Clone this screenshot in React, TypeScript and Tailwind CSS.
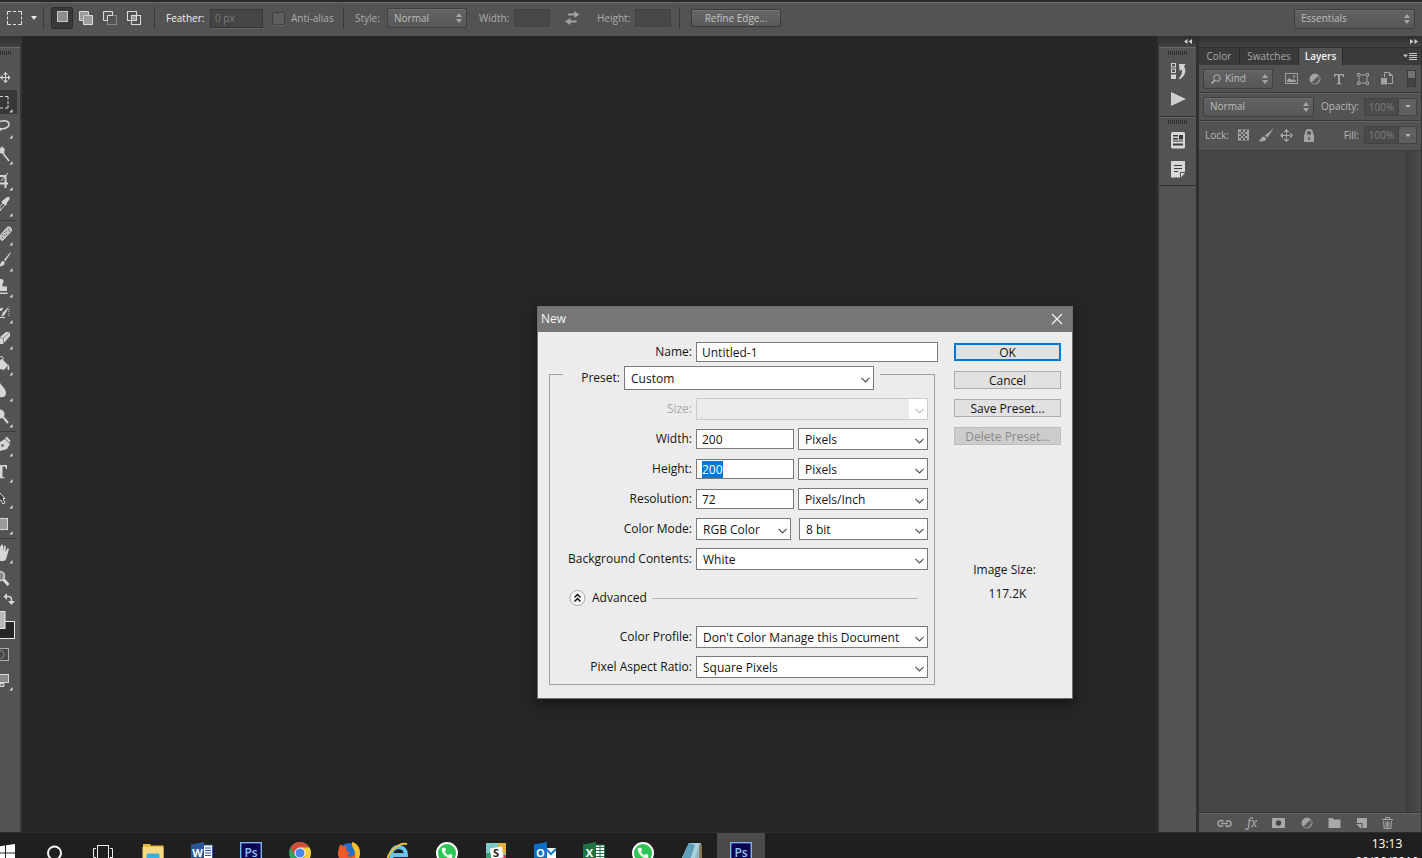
import { useEffect, useRef, type ReactNode } from 'react';
import { Phone } from 'lucide-react';
import clsx from 'clsx';

const TOOL = '#d6d6d6';

function UpDown() {
  return (
    <svg className="pointer-events-none absolute right-1 top-1/2 -translate-y-1/2" width="6" height="10" viewBox="0 0 6 10">
      <path d="M3 0l3 4H0zM3 10l3-4H0z" fill="#a6a6a6" />
    </svg>
  );
}

interface DarkSelectProps {
  label: string;
  value: string;
  className: string;
  textClass?: string;
  children?: ReactNode;
}

function DarkSelect({ label, value, className, textClass = 'pl-[6px]', children }: DarkSelectProps) {
  return (
    <div
      className={clsx(
        'relative h-5 shrink-0 rounded-[2px] border border-[#3f3f3f] bg-linear-to-b from-[#636363] to-[#575757] shadow-[inset_0_1px_0_#6d6d6d]',
        className,
      )}
    >
      <select aria-label={label} className={clsx('block h-full w-full appearance-none bg-transparent text-[#bdbdbd] outline-none', textClass)}>
        <option>{value}</option>
      </select>
      {children}
      <UpDown />
    </div>
  );
}

function Separator() {
  return <div className="h-[22px] w-px shrink-0 bg-[#3c3c3c]" />;
}

function OptionsBar() {
  return (
    <header className="flex h-9 shrink-0 items-center border-t-2 border-[#282828] bg-[#535353] pb-[2px] pr-[7px] text-[10px] text-[#adadad] shadow-[inset_0_1px_0_#6c6c6c]">
      <button aria-label="Rectangular marquee presets" className="flex w-[43px] shrink-0 items-center gap-[9px] pl-[7px]">
        <svg width="15" height="14" viewBox="0 0 15 14" fill="none" stroke="#e0e0e0">
          <path d="M.5 4V.5H4M6 .5h3M11 .5h3.500V4M14.500 5.500v3M14.500 10v3.500H11M9 13.500H6M4 13.500H.5V10M.5 8.500v-3" />
        </svg>
        <svg width="6" height="4" viewBox="0 0 6 4"><path d="M0 0h6L3 4z" fill="#e6e6e6" /></svg>
      </button>
      <Separator />
      <div className="ml-[7px] flex shrink-0 items-center">
        <button aria-label="New selection" className="flex h-[22px] w-[22px] items-center justify-center rounded-[2px] border border-[#2c2c2c] bg-[#393939] pb-[3px]">
          <svg width="11" height="11" viewBox="0 0 11 11"><rect x=".5" y=".5" width="10" height="10" fill="#8d8d8d" stroke="#c9c9c9" /></svg>
        </button>
        <button aria-label="Add to selection" className="ml-[6px]">
          <svg width="14" height="14" viewBox="0 0 14 14">
            <path d="M.5.5h9v4h4v9h-9v-4h-4z" fill="#9b9b9b" stroke="#dcdcdc" />
            <path d="M4.500 9.500v-5h5" fill="none" stroke="#c8c8c8" />
          </svg>
        </button>
        <button aria-label="Subtract from selection" className="ml-[10px]">
          <svg width="14" height="14" viewBox="0 0 14 14" fill="none">
            <rect x="4.500" y="4.500" width="9" height="9" stroke="#878787" />
            <path d="M.5.5h9v4h-5v5h-4z" fill="#5c5c5c" stroke="#dcdcdc" />
          </svg>
        </button>
        <button aria-label="Intersect with selection" className="ml-[10px]">
          <svg width="14" height="14" viewBox="0 0 14 14" fill="none" stroke="#dcdcdc">
            <rect x="4.500" y="4.500" width="5" height="5" fill="#9b9b9b" />
            <rect x=".5" y=".5" width="9" height="9" />
            <rect x="4.500" y="4.500" width="9" height="9" />
          </svg>
        </button>
      </div>
      <div className="ml-[13px]" />
      <Separator />
      <label htmlFor="feather" className="ml-[11px] w-11 shrink-0 text-[#f2f2f2]">Feather:</label>
      <input
        id="feather"
        defaultValue="0 px"
        className="h-[19px] w-[53px] shrink-0 border border-[#363636] bg-[#454545] pl-1 text-[#7c7c7c] shadow-[0_1px_0_#636363] outline-none"
      />
      <input
        id="antialias"
        type="checkbox"
        className="ml-[9px] h-[13px] w-[13px] shrink-0 appearance-none rounded-[2px] border border-[#404040] bg-[#5e5e5e] shadow-[0_1px_0_#626262]"
      />
      <label htmlFor="antialias" className="ml-[6px] w-[52px] shrink-0">Anti-alias</label>
      <Separator />
      <span className="ml-[11px] w-8 shrink-0">Style:</span>
      <DarkSelect label="Style" value="Normal" className="w-20" />
      <label htmlFor="selw" className="ml-3 w-[35px] shrink-0">Width:</label>
      <input id="selw" className="h-[18px] w-9 shrink-0 border border-[#414141] bg-[#484848] shadow-[0_1px_0_#5c5c5c]" />
      <button aria-label="Swap width and height" className="ml-[15px] shrink-0">
        <svg width="15" height="14" viewBox="0 0 15 14" fill="#a2a2a2">
          <path d="M9 0l5.500 3.500L9 7V4.500H3v-2h6zM5.500 7L0 10.500 5.500 14v-2.500h6v-2h-6z" />
        </svg>
      </button>
      <label htmlFor="selh" className="ml-[17px] w-[38px] shrink-0">Height:</label>
      <input id="selh" className="h-[18px] w-9 shrink-0 border border-[#414141] bg-[#484848] shadow-[0_1px_0_#5c5c5c]" />
      <div className="ml-[8px]" />
      <Separator />
      <button className="ml-[11px] h-[18px] w-[90px] shrink-0 rounded-[2px] border border-[#3b3b3b] bg-linear-to-b from-[#676767] to-[#5a5a5a] text-[#c4c4c4] shadow-[inset_0_1px_0_#757575]">
        Refine Edge...
      </button>
      <div className="flex-1" />
      <DarkSelect label="Workspace" value="Essentials" className="mt-px w-[121px]" />
    </header>
  );
}

interface Tool {
  name: string;
  active?: boolean;
  plain?: boolean;
  art: ReactNode;
}

// The palette hangs over the left edge of the window, so only the right part of each glyph is drawn.
const toolGroups: Tool[][] = [
  [
    {
      name: 'Move',
      plain: true,
      art: (
        <g fill={TOOL}>
          <path d="M0 14h10v1H0zM5 10h1v9H5z" />
          <path d="M5.500 9l2.500 2.500H3zM5.500 20L3 17.500h5zM10.500 14.500L8 12v5zM0 14.500L2.500 12v5z" />
        </g>
      ),
    },
    { name: 'Marquee', active: true, art: <path d="M0 7.500h3M5 7.500h3v3M8 12v3M8 16v3H5M3 19H0" stroke={TOOL} fill="none" /> },
    {
      name: 'Lasso',
      art: <path d="M0 6.500c4-1.500 9-1 9 3 0 3-5 5-9 4M0 15.500l2-2" stroke={TOOL} strokeWidth="1.500" fill="none" />,
    },
    {
      name: 'Magic Wand',
      art: <path d="M2 11l7 9M0 9.500h5M2 5.500v7M0 7l4 5M4 7l-4 5" stroke={TOOL} strokeWidth="1.500" fill="none" />,
    },
    {
      name: 'Crop',
      art: (
        <g stroke={TOOL} fill="none">
          <path d="M0 9h5.500v12M0 16.500h8" strokeWidth="2" />
          <path d="M1 14l7-8" />
        </g>
      ),
    },
    {
      name: 'Eyedropper',
      art: (
        <g fill={TOOL}>
          <path d="M2 8l2-1.500L6.500 4.500c2-2 4.500 0 2.500 2.500L7 9.500 6.500 12 5 12.500 1.500 9z" />
          <path d="M3 10L0 13.500V18l4.500-5.500" stroke={TOOL} fill="none" />
        </g>
      ),
    },
  ],
  [
    {
      name: 'Healing Brush',
      art: (
        <g>
          <path d="M-2 16L7 5.500c2-2 6 1 4 4L2 19" fill="#bdbdbd" stroke={TOOL} />
          <g fill="#666"><path d="M4 10h1v1H4zM6 12h1v1H6zM6 9h1v1H6zM4 13h1v1H4zM8 7h1v1H8zM9 9h1v1H9zM2 12h1v1H2zM2 15h1v1H2z" /></g>
        </g>
      ),
    },
    {
      name: 'Brush',
      art: <path d="M10.500 4L4 12l1 1.500 5.500-8zM3 13c-2 0-2 3-4 5 3 1 6-1 5.500-4z" fill={TOOL} />,
    },
    {
      name: 'Clone Stamp',
      art: <path d="M-1 5h2c3 0 3 3 1.500 5v2.500H7V17H-1zM0 18.500h7.500V20H0z" fill={TOOL} />,
    },
    {
      name: 'History Brush',
      art: (
        <g fill={TOOL}>
          <path d="M9.500 6L3 12.500 1 17l3.500-2z" />
          <path d="M0 9l3-1-2 3zM0 17.500h5" stroke={TOOL} />
          <path d="M9 9v7" stroke={TOOL} strokeDasharray="1 1" />
        </g>
      ),
    },
    {
      name: 'Eraser',
      art: (
        <g>
          <path d="M0 11l6-5h4v4l-7 8H0z" fill={TOOL} />
          <path d="M0 12h3.500L10 6M3.500 12v6" stroke="#858585" fill="none" />
        </g>
      ),
    },
    {
      name: 'Paint Bucket',
      art: (
        <g fill={TOOL}>
          <path d="M0 8l2-1 6 6-4 5-4-1z" />
          <path d="M3 9V5.500C3 4 0 4 0 6" fill="none" stroke={TOOL} />
          <path d="M8 12c1 2 2 4 1 6-2 0-2-2-1-6z" />
        </g>
      ),
    },
    { name: 'Blur', art: <path d="M0 5c2 3 6 6 6 10 0 5-6 5-8 3z" fill={TOOL} /> },
    {
      name: 'Dodge',
      art: (
        <g>
          <circle cx="0" cy="10" r="4.500" fill={TOOL} />
          <path d="M3 13l5 6" stroke={TOOL} strokeWidth="2" />
        </g>
      ),
    },
  ],
  [
    {
      name: 'Pen',
      art: (
        <g>
          <path d="M0 9l5-3 5 5-3 5-7 2z" fill={TOOL} />
          <path d="M4.500 5L7 3.500 11 8 9.500 10z" fill={TOOL} stroke="#535353" strokeWidth=".5" />
          <circle cx="2.500" cy="12.500" r="1.200" fill="#535353" />
        </g>
      ),
    },
    {
      name: 'Type',
      art: <path d="M-6 6H7v4H6C6 8 5 7.300 2.500 7.300V17c0 1 .5 1.400 2 1.500v.8h-6v-.8C0 18.400 0 18 0 17V7h-6z" fill={TOOL} />,
    },
    { name: 'Path Selection', art: <path d="M0 8l5 5.500H3l2 4.500-2 1-2-4-3 2z" fill="#3c3c3c" stroke={TOOL} /> },
    { name: 'Rectangle', art: <rect x="-8" y="7.500" width="15.500" height="11" fill="#999" stroke={TOOL} /> },
  ],
  [
    {
      name: 'Hand',
      art: (
        <path
          d="M-1 12V7c0-1.500 2-1.500 2 0v4V5.500C1 4 3 4 3 5.500V11l.8-4.500c.3-1.500 2-1 1.900.3L5.500 12l1.500-3c.7-1.300 2.200-.7 1.800.6L7 16c-.7 3-1.500 5-4 5h-5z"
          fill={TOOL}
        />
      ),
    },
    {
      name: 'Zoom',
      plain: true,
      art: (
        <g>
          <circle cx="0" cy="10" r="4.500" fill="#888" stroke={TOOL} strokeWidth="1.500" />
          <path d="M3.500 13.500l5 5.500" stroke={TOOL} strokeWidth="3" />
        </g>
      ),
    },
  ],
];

function ToolPalette() {
  return (
    <aside className="flex w-[22px] shrink-0 flex-col border-r-2 border-[#353535] bg-[#535353]">
      <div className="h-3 shrink-0 border-b border-[#6a6a6a] bg-linear-to-b from-[#2f2f2f] to-[#434343]" />
      <Grip className="mb-2 ml-0 mt-[3px] w-3" />
      {toolGroups.map((group, i) => (
        <div key={i} className="flex flex-col">
          {i > 0 && <div className="my-px h-px w-4 bg-[#3b3b3b]" />}
          {group.map((tool) => (
            <button
              key={tool.name}
              aria-label={tool.name}
              className={clsx('h-[26px] w-[17px]', tool.active && 'rounded-r-[2px] bg-[#373737] bg-clip-content pb-px pt-px')}
            >
              <svg className={clsx(tool.active && '-my-px')} width="17" height="26" viewBox="0 0 17 26">
                {tool.art}
                {!tool.plain && <path d="M12.500 20v3.500H9.500z" fill="#e4e4e4" />}
              </svg>
            </button>
          ))}
        </div>
      ))}
      <button aria-label="Swap colors" className="h-[18px] w-[17px]">
        <svg width="17" height="18" viewBox="0 0 17 18" fill="none" stroke={TOOL}>
          <path d="M5 4.500h3.500c2 0 3 1 3 3V10" strokeWidth="1.500" />
          <path d="M7 1L3.500 4.500 7 8zM8 9h7l-3.500 4z" fill={TOOL} stroke="none" />
        </svg>
      </button>
      <svg width="17" height="30" viewBox="0 0 17 30">
        <rect x="-4" y="11.500" width="18.500" height="17" fill="#262626" stroke="#e8e8e8" />
        <rect x="-10" y="1.500" width="15" height="17" fill="#b8b8b8" stroke="#e8e8e8" />
      </svg>
      <button aria-label="Quick mask" className="mt-[7px]">
        <svg width="17" height="15" viewBox="0 0 17 15" fill="none">
          <rect x="-8" y="1.500" width="16.500" height="12" fill="#484848" stroke="#ababab" />
          <path d="M0 3.500a4 4 0 010 8" stroke="#ccc" strokeDasharray="1 1" />
        </svg>
      </button>
      <button aria-label="Screen mode" className="mt-[11px]">
        <svg width="17" height="18" viewBox="0 0 17 18">
          <rect x="-8" y="1.500" width="16.500" height="8" fill="#8a8a8a" stroke={TOOL} />
          <path d="M0 10.500h4v3H0z" fill="#777" stroke={TOOL} />
          <path d="M12.500 14v3.500H9.500z" fill="#e4e4e4" />
        </svg>
      </button>
    </aside>
  );
}

function Grip({ className }: { className: string }) {
  return <div className={clsx('h-1 shrink-0 bg-[repeating-linear-gradient(90deg,#2e2e2e_0_1px,#535353_1px_2px)]', className)} />;
}

function PanelDock() {
  return (
    <aside className="flex w-10 shrink-0 flex-col border-r-3 border-[#2f2f2f] bg-[#535353] shadow-[-2px_0_0_#333333]">
      <div className="flex h-3 shrink-0 items-center justify-end border-b border-[#6a6a6a] bg-linear-to-b from-[#2f2f2f] to-[#434343] pr-1">
        <svg width="8" height="5" viewBox="0 0 8 5" fill="#cfcfcf"><path d="M3.500 0v5L0 2.500zM8 0v5L4.500 2.500z" /></svg>
      </div>
      <div className="flex h-[69px] shrink-0 flex-col items-center border-b border-[#333]">
        <Grip className="mt-[3px] w-5" />
        <button aria-label="History" className="ml-[2px] mt-[7px]">
          <svg width="17" height="18" viewBox="0 0 17 18">
            <g fill="none" stroke="#d2d2d2"><rect x="1.500" y="1.500" width="4" height="3.500" /><rect x="1.500" y="7" width="4" height="3.500" /></g>
            <rect x="1" y="12.500" width="5" height="4.500" fill="#d2d2d2" />
            <path d="M9 2h6.500L14 4.500c2.500 3.500 1.500 9-3.500 12.500H8.500c3.500-4 4-7.500 3-9.500L9.500 9z" fill="#d2d2d2" />
          </svg>
        </button>
        <button aria-label="Actions" className="ml-px mt-3">
          <svg width="17" height="14" viewBox="0 0 17 14"><path d="M1 0l15 7-15 7z" fill="#cfcfcf" /></svg>
        </button>
      </div>
      <div className="flex h-[69px] shrink-0 flex-col items-center border-b border-[#333] shadow-[inset_0_1px_0_#666]">
        <Grip className="mt-[3px] w-5" />
        <button aria-label="Properties" className="mt-2">
          <svg width="16" height="17" viewBox="0 0 16 17">
            <rect x="1" width="14" height="16.500" rx="1.500" fill="#d8d8d8" />
            <path d="M3 3h5v1.500H3zM3 6h5v1.500H3zM9 3h4v4.500H9zM3 11.500h10v2H3z" fill="#3a3a3a" />
            <path d="M3 9h10" stroke="#3a3a3a" />
          </svg>
        </button>
        <button aria-label="Notes" className="mt-3">
          <svg width="16" height="17" viewBox="0 0 16 17">
            <path d="M1 0h14v11h-5v5.500H1zM11 12h4l-4 4.500z" fill="#d8d8d8" />
            <path d="M4 4.500h8M4 7.500h8M4 10.500h4" stroke="#3a3a3a" />
          </svg>
        </button>
      </div>
    </aside>
  );
}

function PercentField({ id, label }: { id: string; label: string }) {
  return (
    <>
      <label htmlFor={id} className="shrink-0 pr-[5px]">{label}</label>
      <input
        id={id}
        defaultValue="100%"
        disabled
        className="h-[18px] w-[35px] shrink-0 border border-[#424242] bg-[#4a4a4a] text-center text-[#7e7e7e]"
      />
      <button aria-label={label + ' slider'} className="flex h-[18px] w-[18px] shrink-0 items-center justify-center rounded-r-[2px] border border-l-0 border-[#424242] bg-[#606060]">
        <svg width="6" height="3" viewBox="0 0 6 3"><path d="M0 0h6L3 3z" fill="#b0b0b0" /></svg>
      </button>
    </>
  );
}

function AdjustIcon() {
  return (
    <svg width="12" height="12" viewBox="0 0 12 12">
      <circle cx="6" cy="6" r="5" fill="#a3a3a3" stroke="#a3a3a3" />
      <path d="M9.500 2.500a5 5 0 01-7 7z" fill="#5b5b5b" />
    </svg>
  );
}

const layerFilters: { name: string; art: ReactNode }[] = [
  {
    name: 'Pixel layers',
    art: (
      <svg width="13" height="11" viewBox="0 0 13 11">
        <rect x=".5" y=".5" width="12" height="10" fill="none" stroke="#a3a3a3" />
        <path d="M2 9V7l2.500-2L7 7l2-1 2 2v1zM8 2.500h2v2H8z" fill="#a3a3a3" />
      </svg>
    ),
  },
  { name: 'Adjustment layers', art: <AdjustIcon /> },
  {
    name: 'Type layers',
    art: <svg width="12" height="12" viewBox="0 0 12 12"><path d="M1 1h10v3h-1c0-1.200-.5-1.700-3-1.700V9.500c0 .8.300 1 1.500 1v.8h-5v-.8c1.200 0 1.500-.2 1.500-1V2.300C2.500 2.300 2 2.800 2 4H1z" fill="#a3a3a3" /></svg>,
  },
  {
    name: 'Shape layers',
    art: (
      <svg width="12" height="12" viewBox="0 0 12 12" fill="none" stroke="#a3a3a3">
        <path d="M2 3.500v5M10 3.500v5M3.500 2h5M3.500 10h5" />
        <path d="M.5.500h2.500v2.500h-2.500zM9 .5h2.500v2.500H9zM.5 9h2.500v2.500H.5zM9 9h2.500v2.500H9z" />
      </svg>
    ),
  },
  {
    name: 'Smart objects',
    art: (
      <svg width="12" height="13" viewBox="0 0 12 13">
        <path d="M3.500 5V.5h4.500L11.500 4v7.500H7" fill="none" stroke="#a3a3a3" />
        <path d="M8 0v4h4M0 6h6v6.500H0z" fill="#a3a3a3" />
      </svg>
    ),
  },
];

function LayersPanel() {
  return (
    <aside className="flex w-[223px] shrink-0 flex-col border-r border-[#333] bg-[#535353] text-[10px] text-[#b8b8b8]">
      <div className="flex h-3 shrink-0 items-center justify-end border-b border-[#2d2d2d] bg-linear-to-b from-[#2f2f2f] to-[#434343] pr-[3px]">
        <svg width="8" height="5" viewBox="0 0 8 5" fill="#cfcfcf"><path d="M0 0v5l3.500-2.500zM4.500 0v5L8 2.500z" /></svg>
      </div>
      <div className="flex h-[17px] shrink-0 items-stretch bg-[#3a3a3a] text-[#a8a8a8]">
        <button className="w-[41px] border-r border-[#2b2b2b]">Color</button>
        <button className="w-[59px] border-r border-[#2b2b2b]">Swatches</button>
        <button className="w-11 border-r border-[#2b2b2b] bg-[#535353] font-semibold text-[#f4f4f4]">Layers</button>
        <div className="flex-1" />
        <button aria-label="Panel menu" className="pr-1">
          <svg width="14" height="8" viewBox="0 0 14 8"><path d="M0 1.500h5L2.500 4.500z" fill="#c8c8c8" /><path d="M6 .5h8M6 2.500h8M6 4.500h8M6 6.500h8" stroke="#c8c8c8" /></svg>
        </button>
      </div>
      <div className="flex h-7 shrink-0 items-center border-b border-[#393939] pl-1 pr-[5px]">
        <DarkSelect label="Filter kind" value="Kind" className="w-[70px]" textClass="pl-[21px]">
          <svg className="pointer-events-none absolute left-[7px] top-1" width="10" height="10" viewBox="0 0 10 10" fill="none" stroke="#b4b4b4">
            <circle cx="6" cy="4" r="3.300" />
            <path d="M3.500 6.500L.5 9.500" strokeWidth="1.500" />
          </svg>
        </DarkSelect>
        <div className="ml-[6px] flex flex-1 items-center">
          {layerFilters.map((f) => (
            <button key={f.name} aria-label={f.name} className="flex w-6 shrink-0 items-center justify-center">{f.art}</button>
          ))}
        </div>
        <button aria-label="Toggle filtering" className="h-[17px] w-[9px] border border-[#3a3a3a] bg-[#434343]">
          <div className="-mt-2 h-[7px] bg-[#737373]" />
        </button>
      </div>
      <div className="flex h-7 shrink-0 items-center border-b border-[#393939] pl-1 pr-[4px] shadow-[inset_0_1px_0_#646464]">
        <DarkSelect label="Blend mode" value="Normal" className="w-[111px]" />
        <div className="flex-1" />
        <PercentField id="opacity" label="Opacity:" />
      </div>
      <div className="flex h-[30px] shrink-0 items-center border-b border-[#3c3c3c] pb-px pl-[6px] pr-[4px] shadow-[inset_0_1px_0_#646464]">
        <span className="w-8 shrink-0">Lock:</span>
        <button aria-label="Lock transparent pixels">
          <svg width="13" height="12" viewBox="0 0 13 12"><rect x="1" y=".5" width="11" height="11" fill="#a3a3a3" /><path d="M2 3h2v2H2zM6 3h2v2H6zM4 1h2v2H4zM8 1h2v2H8zM4 5h2v2H4zM8 5h2v2H8zM2 7h2v2H2zM6 7h2v2H6zM4 9h2v2H4zM8 9h2v2H8z" fill="#555" /></svg>
        </button>
        <button aria-label="Lock image pixels" className="ml-2">
          <svg width="16" height="14" viewBox="0 0 16 14" fill="#a8a8a8"><path d="M16 0L9.500 9.500 7 7.500zM6 8.500l2.500 2C8 13.500 3.500 14 0 13c3 0 2.500-4.500 6-4.500z" /></svg>
        </button>
        <button aria-label="Lock position" className="ml-[6px]">
          <svg width="13" height="13" viewBox="0 0 13 13" fill="#a8a8a8">
            <path d="M6 2h1v9H6zM2 6h9v1H2zM6.500 0L9.500 3h-6zM6.500 13l3-3h-6zM0 6.500l3-3v6zM13 6.500l-3-3v6z" />
          </svg>
        </button>
        <button aria-label="Lock all" className="ml-[10px]">
          <svg width="12" height="13" viewBox="0 0 12 13"><path d="M3 6V4a3 3 0 016 0v2" fill="none" stroke="#a3a3a3" strokeWidth="2" /><path d="M1 5.500h10V13H1z" fill="#a3a3a3" /><path d="M5.500 8h1.200v3H5.500z" fill="#444" /></svg>
        </button>
        <div className="flex-1" />
        <PercentField id="fill" label="Fill:" />
      </div>
      <div className="flex flex-1 justify-end bg-[#464646]">
        <div className="w-[15px] border-l border-[#3c3c3c] bg-linear-to-r from-[#3f3f3f] to-[#4a4a4a]" />
      </div>
      <footer className="flex h-[19px] shrink-0 items-center justify-between border-t border-[#666] pl-[18px] pr-[28px] shadow-[0_-1px_0_#353535]">
        <button aria-label="Link layers">
          <svg width="15" height="9" viewBox="0 0 15 9" fill="none" stroke="#a8a8a8" strokeWidth="1.500"><path d="M6 6.500c-1 1.200-5 1.500-5-2s4-3.500 5.500-2M9 2.500c1-1.200 5-1.500 5 2s-4 3.500-5.500 2M4 4.500h7" /></svg>
        </button>
        <button aria-label="Layer style" className="font-serif text-sm italic leading-none text-[#a8a8a8]">fx</button>
        <button aria-label="Add mask">
          <svg width="13" height="10" viewBox="0 0 13 10"><path d="M0 0h13v10H0z" fill="#a8a8a8" /><circle cx="6.500" cy="5" r="2.700" fill="#444" /></svg>
        </button>
        <button aria-label="New adjustment layer"><AdjustIcon /></button>
        <button aria-label="New group">
          <svg width="13" height="10" viewBox="0 0 13 10"><path d="M.5 0h4l1.500 1.500h6.500V10H.5z" fill="#a8a8a8" /></svg>
        </button>
        <button aria-label="New layer">
          <svg width="11" height="11" viewBox="0 0 11 11"><path d="M1 0h10v10H6.500V5H1zM0 6h5.500v5z" fill="#a8a8a8" /></svg>
        </button>
        <button aria-label="Delete layer">
          <svg width="11" height="12" viewBox="0 0 11 12" fill="none" stroke="#a8a8a8"><path d="M0 2.500h11M3.500 2V.5h4V2M1.500 4l.7 7.500h6.600L9.500 4M4 4.500v6M5.500 4.500v6M7 4.500v6" /></svg>
        </button>
      </footer>
    </aside>
  );
}

interface WinSelectProps {
  id: string;
  value: string;
  className?: string;
  disabled?: boolean;
}

function WinSelect({ id, value, className = 'h-[22px] flex-1', disabled }: WinSelectProps) {
  return (
    <div className={clsx('relative', className)}>
      <select
        id={id}
        disabled={disabled}
        className={clsx(
          'block h-full w-full appearance-none border pl-[6px] pt-[2px] outline-none',
          disabled ? 'border-[#cccccc] bg-[#ebebeb]' : 'border-[#7a7a7a] bg-white',
        )}
      >
        <option>{value}</option>
      </select>
      {disabled && <div className="absolute inset-y-px right-px w-[18px] bg-white" />}
      <svg className="pointer-events-none absolute right-1 top-[45%]" width="9" height="6" viewBox="0 0 9 6">
        <path d="M.5.800l4 4 4-4" fill="none" stroke={disabled ? '#bcbcbc' : '#505050'} strokeWidth="1.200" />
      </svg>
    </div>
  );
}

interface FormRowProps {
  id: string;
  label: string;
  muted?: boolean;
  children: ReactNode;
}

function FormRow({ id, label, muted, children }: FormRowProps) {
  return (
    <div className="flex h-[22px] items-center gap-1">
      <label htmlFor={id} className={clsx('w-[142px] shrink-0 pb-px text-right', muted && 'text-[#a9a9a9]')}>{label}</label>
      {children}
    </div>
  );
}

const winInput = 'h-5 border border-[#7a7a7a] bg-white pl-[5px] outline-none selection:bg-[#0078d7] selection:text-white';
const winButton = 'h-[18px] border border-[#adadad] bg-[#e1e1e1] pt-[2px] leading-none';

function NewDocumentDialog() {
  const heightRef = useRef<HTMLInputElement>(null);

  useEffect(() => {
    heightRef.current?.focus();
    heightRef.current?.select();
  }, []);

  return (
    <div
      role="dialog"
      aria-label="New"
      className="absolute left-[537px] top-[306px] w-[536px] border border-[#6e6e6e] bg-[#ececec] text-[12px] text-[#141414] shadow-[0_4px_12px_rgba(0,0,0,0.5)]"
    >
      <div className="flex h-[25px] items-center justify-between bg-[#767676] pb-[2px] pl-[3px] pr-[9px] text-[#f4f4f4]">
        <span>New</span>
        <button aria-label="Close">
          <svg width="12" height="12" viewBox="0 0 12 12"><path d="M1 1l10 10M11 1L1 11" stroke="#f4f4f4" strokeWidth="1.200" /></svg>
        </button>
      </div>
      <div className="flex gap-4 pb-[13px] pl-[11px] pr-[11px] pt-[10px]">
        <div className="min-w-0 flex-1">
          <div className="flex items-center gap-1">
            <label htmlFor="name" className="w-[143px] shrink-0 text-right">Name:</label>
            <input id="name" defaultValue="Untitled-1" className={clsx(winInput, 'min-w-0 flex-1')} />
          </div>
          <div className="mr-[3px] mt-3 border border-[#a0a0a0] pb-[6px] pr-[6px]">
            <div className="-mt-[9px] ml-[13px] flex w-[317px] items-center gap-1 bg-[#ececec] pr-[6px]">
              <label htmlFor="preset" className="w-[57px] shrink-0 text-right">Preset:</label>
              <WinSelect id="preset" value="Custom" className="h-6 flex-1" />
            </div>
            <div className="mt-2 flex flex-col gap-2">
              <FormRow id="size" label="Size:" muted>
                <WinSelect id="size" value="" disabled />
              </FormRow>
              <FormRow id="width" label="Width:">
                <input id="width" defaultValue="200" className={clsx(winInput, 'w-[98px]')} />
                <WinSelect id="width-unit" value="Pixels" />
              </FormRow>
              <FormRow id="height" label="Height:">
                <input id="height" ref={heightRef} defaultValue="200" className={clsx(winInput, 'w-[98px]')} />
                <WinSelect id="height-unit" value="Pixels" />
              </FormRow>
              <FormRow id="resolution" label="Resolution:">
                <input id="resolution" defaultValue="72" className={clsx(winInput, 'w-[98px]')} />
                <WinSelect id="resolution-unit" value="Pixels/Inch" />
              </FormRow>
              <FormRow id="mode" label="Color Mode:">
                <WinSelect id="mode" value="RGB Color" className="mr-1 h-[22px] w-[95px]" />
                <WinSelect id="depth" value="8 bit" />
              </FormRow>
              <FormRow id="contents" label="Background Contents:">
                <WinSelect id="contents" value="White" />
              </FormRow>
              <div className="flex h-10 items-center pl-[19px] pr-[10px]">
                <button className="flex items-center gap-[6px]">
                  <svg width="17" height="18" viewBox="0 0 17 18">
                    <circle cx="8.500" cy="9" r="7.500" fill="#fafafa" stroke="#a6a6a6" />
                    <path d="M5.500 8.500l3-3 3 3M5.500 12.500l3-3 3 3" fill="none" stroke="#111" strokeWidth="1.500" />
                  </svg>
                  Advanced
                </button>
                <div className="ml-[5px] h-px flex-1 bg-[#b4b4b4]" />
              </div>
              <FormRow id="profile" label="Color Profile:">
                <WinSelect id="profile" value="Don't Color Manage this Document" />
              </FormRow>
              <FormRow id="ratio" label="Pixel Aspect Ratio:">
                <WinSelect id="ratio" value="Square Pixels" />
              </FormRow>
            </div>
          </div>
        </div>
        <div className="flex w-[107px] shrink-0 flex-col gap-[10px] pt-px">
          <button className="h-[18px] border-2 border-[#0078d7] bg-[#e1e1e1] pt-[2px] leading-none">OK</button>
          <button className={winButton}>Cancel</button>
          <button className={winButton}>Save Preset...</button>
          <button disabled className="h-[18px] border border-[#bfbfbf] bg-[#cccccc] pt-[2px] leading-none text-[#8a8a8a]">Delete Preset...</button>
          <div className="mt-[107px] flex flex-col gap-2 text-center leading-4">
            <span className="pr-[6px]">Image Size:</span>
            <span>117.2K</span>
          </div>
        </div>
      </div>
    </div>
  );
}

function PhotoshopLogo() {
  return (
    <svg width="22" height="22" viewBox="0 0 22 22">
      <rect x=".7" y=".7" width="20.600" height="20.600" fill="#0c0450" stroke="#7cb5e8" strokeWidth="1.400" />
      <text x="11" y="15" textAnchor="middle" fontSize="12" fontWeight="600" fill="#8fc7f5">Ps</text>
    </svg>
  );
}

function WhatsAppLogo() {
  return (
    <div className="relative flex h-[22px] w-[22px] items-center justify-center rounded-full border-2 border-white bg-[#2dc653]">
      <Phone size={12} fill="#fff" stroke="#fff" strokeWidth={1} />
    </div>
  );
}

const taskbarApps: { name: string; active?: boolean; art: ReactNode }[] = [
  {
    name: 'Start',
    art: <svg width="18" height="18" viewBox="0 0 18 18" fill="#fff"><path d="M0 2.500L8 1.500V8.500H0zM9 1.300L18 0v8.500H9zM0 9.500h8v7l-8-1zM9 9.500h9V18l-9-1.300z" /></svg>,
  },
  { name: 'Search', art: <svg width="16" height="16" viewBox="0 0 16 16"><circle cx="7.500" cy="8" r="6.500" fill="none" stroke="#f4f4f4" strokeWidth="2" /></svg> },
  {
    name: 'Task View',
    art: <svg width="22" height="16" viewBox="0 0 22 16" fill="none" stroke="#f0f0f0"><rect x="4.500" y=".5" width="11" height="15" /><path d="M3 3.500H.5v9H3M17 3.500h2.500v9H17" /></svg>,
  },
  {
    name: 'File Explorer',
    art: <svg width="22" height="20" viewBox="0 0 22 20"><path d="M1 1h7l1 1.500h12.500V19H1z" fill="#e9b83c" /><path d="M.5 4h21v15H.5z" fill="#f8d880" /><path d="M4.500 12c0-1 .5-1.500 1.500-1.500h10c1 0 1.500.5 1.500 1.500v8h-13z" fill="#39b0e3" /></svg>,
  },
  {
    name: 'Word',
    art: (
      <svg width="22" height="22" viewBox="0 0 22 22">
        <path d="M12 3h9.500v16H12z" fill="#fff" stroke="#2b5797" />
        <path d="M14 6h6M14 8.500h6M14 11h6M14 13.500h6" stroke="#2b5797" />
        <path d="M0 2.500L13 0v22L0 19.500z" fill="#2b5797" />
        <text x="6.500" y="15" textAnchor="middle" fontSize="11" fontWeight="700" fill="#fff">W</text>
      </svg>
    ),
  },
  { name: 'Photoshop', art: <PhotoshopLogo /> },
  {
    name: 'Chrome',
    art: (
      <svg width="22" height="22" viewBox="0 0 22 22">
        <circle cx="11" cy="11" r="11" fill="#2f9e58" />
        <path d="M1.500 5.500A11 11 0 0120.500 5.500H11L6.200 13.800z" fill="#d64a3a" />
        <path d="M20.500 5.500A11 11 0 0111 22l4.800-8.200L11 5.500z" fill="#f7cf3d" />
        <circle cx="11" cy="11" r="5" fill="#4a86ee" stroke="#fff" />
      </svg>
    ),
  },
  {
    name: 'Firefox',
    art: (
      <svg width="22" height="22" viewBox="0 0 22 22">
        <circle cx="11" cy="11" r="10" fill="#2270c9" />
        <path d="M1 5l2-3 2 3 4-1-1 4 4 3-3 2c2 3 7 2 8-2 0-4-3-6-3-10 5 2 8 6 8 11A11 11 0 010 11z" fill="#f1592a" />
        <path d="M14 0c6 2 8 6 8 11a11 11 0 01-8 10c3-3 4-7 3-10 0-4-4-6-3-11z" fill="#fbc02a" />
      </svg>
    ),
  },
  {
    name: 'Internet Explorer',
    art: (
      <svg width="24" height="22" viewBox="0 0 24 22" fill="none">
        <path d="M5 13h15c0-5-3-8-7.500-8S5 9 5 13s3 7 7.500 7c3 0 5-1 6.500-3" stroke="#67c4f3" strokeWidth="4" />
        <path d="M2 19C0 12 12 0 21 2" stroke="#f0bf2b" strokeWidth="2" />
      </svg>
    ),
  },
  { name: 'WhatsApp', art: <WhatsAppLogo /> },
  {
    name: 'Slack',
    art: (
      <svg width="20" height="20" viewBox="0 0 20 20">
        <path d="M0 0h20v20H0z" fill="#7fc9c8" /><path d="M12 0h8v10h-8z" fill="#e3b03a" />
        <path d="M0 10h10v10H0z" fill="#3f9a76" /><path d="M10 12h10v8H10z" fill="#d3374f" />
        <path d="M4 5.500l12-2 1.500 11-12 2.500z" fill="#fff" />
        <text x="10" y="14" textAnchor="middle" fontSize="11" fontWeight="700" fill="#222">S</text>
      </svg>
    ),
  },
  {
    name: 'Outlook',
    art: (
      <svg width="22" height="22" viewBox="0 0 22 22">
        <path d="M12 6h10v11H12z" fill="#fff" /><path d="M12 7l5 5 5-5" stroke="#1878cf" strokeWidth="2" fill="none" />
        <path d="M0 2.500L13 0v22L0 19.500z" fill="#0b6fc8" />
        <text x="6.500" y="15" textAnchor="middle" fontSize="11" fontWeight="700" fill="#fff">O</text>
      </svg>
    ),
  },
  {
    name: 'Excel',
    art: (
      <svg width="22" height="22" viewBox="0 0 22 22">
        <path d="M12 3h9.500v16H12z" fill="#fff" stroke="#217346" />
        <path d="M13 5.500h8M13 8.500h8M13 11.500h8M13 14.500h8M17 3v16" stroke="#217346" />
        <path d="M0 2.500L13 0v22L0 19.500z" fill="#217346" />
        <text x="6.500" y="15" textAnchor="middle" fontSize="11" fontWeight="700" fill="#fff">X</text>
      </svg>
    ),
  },
  { name: 'WhatsApp calls', art: <WhatsAppLogo /> },
  {
    name: 'Notes',
    art: (
      <svg width="22" height="22" viewBox="0 0 22 22">
        <path d="M8 1h12l1.500 21H0V18z" fill="#8db9c9" />
        <path d="M8 1h11l-7 21H0v-4z" fill="#a9cfdd" />
        <path d="M8 1L0 18h9L14 3z" fill="#5f9fb8" />
        <path d="M18.500 2l2.500 1v19h-3z" fill="#8a7450" />
      </svg>
    ),
  },
  { name: 'Photoshop window', active: true, art: <PhotoshopLogo /> },
];

function Taskbar() {
  return (
    <footer className="flex h-[26px] shrink-0 items-start justify-between overflow-hidden border-t border-[#2c2c2c] bg-[#1f1f1f]">
      <nav className="-ml-[18px] flex gap-px">
        {taskbarApps.map((app) => (
          <button
            key={app.name}
            aria-label={app.name}
            className={clsx('flex h-10 w-12 items-center justify-center', app.active && 'bg-[#4b4b4b]')}
          >
            {app.art}
          </button>
        ))}
      </nav>
      <time className="flex w-[70px] flex-col items-center pt-[2px] text-[12px] leading-[18px] text-white">
        <span>13:13</span>
        <span>09/09/2019</span>
      </time>
    </footer>
  );
}

export default function App() {
  return (
    <div className="relative flex h-screen flex-col overflow-hidden bg-[#262626] font-['Open_Sans',Tahoma,sans-serif]">
      <OptionsBar />
      <main className="flex min-h-0 flex-1">
        <ToolPalette />
        <div className="flex-1" />
        <PanelDock />
        <LayersPanel />
      </main>
      <Taskbar />
      <NewDocumentDialog />
    </div>
  );
}
